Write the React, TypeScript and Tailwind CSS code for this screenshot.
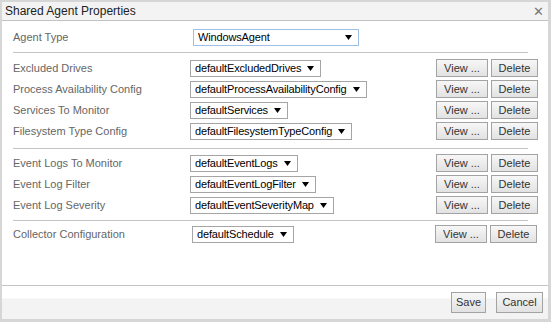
const font = { fontFamily: "'Liberation Sans', Arial, sans-serif" };

type Row = { label: string; value: string };

const driverRows: Row[] = [
  { label: "Excluded Drives", value: "defaultExcludedDrives" },
  { label: "Process Availability Config", value: "defaultProcessAvailabilityConfig" },
  { label: "Services To Monitor", value: "defaultServices" },
  { label: "Filesystem Type Config", value: "defaultFilesystemTypeConfig" },
];

const eventRows: Row[] = [
  { label: "Event Logs To Monitor", value: "defaultEventLogs" },
  { label: "Event Log Filter", value: "defaultEventLogFilter" },
  { label: "Event Log Severity", value: "defaultEventSeverityMap" },
];

const Arrow = () => (
  <svg width="7" height="7" viewBox="0 0 7 7" className="shrink-0">
    <path d="M0 1 H7 L3.5 6 Z" fill="#000" />
  </svg>
);

const Select = ({ value, width, focused }: { value: string; width?: number; focused?: boolean }) => (
  <div
    className={`h-[17px] flex items-center justify-between gap-[6px] pl-[4px] pr-[6px] bg-white border ${focused ? "border-[#9ebfe8]" : "border-[#a5a5a5]"}`}
    style={width ? { width } : undefined}
  >
    <span className="text-[11px] text-black leading-none whitespace-nowrap tracking-[-0.15px]">{value}</span>
    <Arrow />
  </div>
);

const Btn = ({ children, w, h = 18 }: { children: string; w: number; h?: number }) => (
  <button
    className="border border-[#a3a3a3] bg-gradient-to-b from-[#f7f7f7] to-[#e2e2e2] text-[11px] text-[#333] leading-none flex items-center justify-center"
    style={{ width: w, height: h }}
  >
    {children}
  </button>
);

const PropRow = ({ row }: { row: Row }) => (
  <div className="flex items-center h-[18px]">
    <div className="w-[177px] text-[11px] text-[#666] whitespace-nowrap">{row.label}</div>
    <Select value={row.value} />
    <div className="ml-auto flex gap-[3px]">
      <Btn w={52}>View ...</Btn>
      <Btn w={47}>Delete</Btn>
    </div>
  </div>
);

const Divider = () => <div className="h-px bg-[#c4c4c4] mr-[10px]" />;

export default function App() {
  return (
    <div className="w-[551px] h-[322px] bg-[#d6d6d6] pt-[2px] pl-[2px] pr-[3px] pb-[3px]" style={font}>
      <div className="h-full flex flex-col bg-white">
        <div className="h-[19px] shrink-0 bg-[#f3f3f3] border-b border-[#c2c2c2] flex items-center justify-between pl-[3px] pr-[4px]">
          <span className="text-[12px] text-[#222]">Shared Agent Properties</span>
          <span className="text-[13px] text-[#777] leading-none">✕</span>
        </div>
        <div className="flex-1 pl-[11px] pr-[10px]">
          <div className="flex items-center h-[17px] mt-[8px] mb-[6px]">
            <div className="w-[180px] text-[11px] text-[#666]">Agent Type</div>
            <Select value="WindowsAgent" width={166} focused />
          </div>
          <Divider />
          <div className="flex flex-col gap-[3px] mt-[6px] mb-[8px]">
            {driverRows.map((r) => (
              <PropRow key={r.label} row={r} />
            ))}
          </div>
          <Divider />
          <div className="flex flex-col gap-[3px] mt-[5px] mb-[6px]">
            {eventRows.map((r) => (
              <PropRow key={r.label} row={r} />
            ))}
          </div>
          <Divider />
          <div className="flex items-center h-[18px] mt-[4px] pr-[1px]">
            <div className="w-[179px] text-[11px] text-[#666]">Collector Configuration</div>
            <Select value="defaultSchedule" />
            <div className="ml-auto flex gap-[3px]">
              <Btn w={52}>View ...</Btn>
              <Btn w={47}>Delete</Btn>
            </div>
          </div>
        </div>
        <div className="h-px bg-[#c4c4c4] shrink-0" />
        <div className="h-[33px] shrink-0 bg-gradient-to-b from-white from-[35%] to-[#f3f3f3] to-[40%] flex items-center justify-end gap-[10px] pr-[5px]">
          <Btn w={35} h={21}>Save</Btn>
          <Btn w={47} h={21}>Cancel</Btn>
        </div>
      </div>
    </div>
  );
}
